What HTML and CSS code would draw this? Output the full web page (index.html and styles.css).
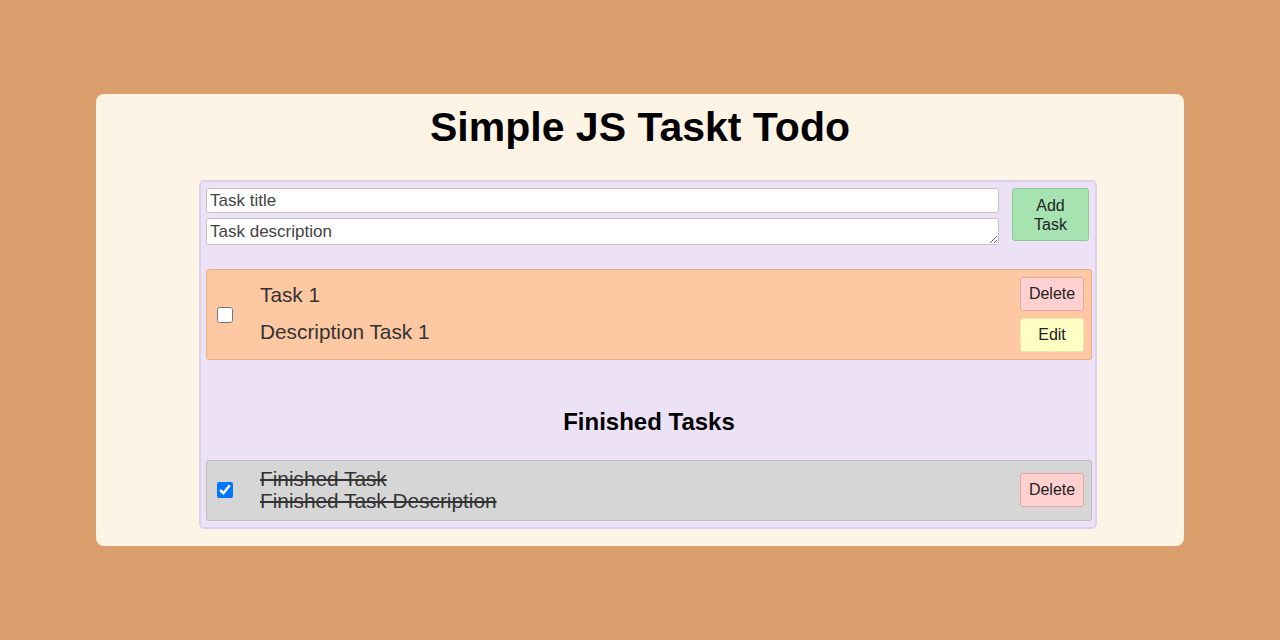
FILE: index.html
```html
<!DOCTYPE html>
<html>
<head>
<meta charset="utf-8">
<link rel="stylesheet" href="styles.css">
</head>
<body>
<div class="card">
  <h1 class="title">Simple JS Taskt Todo</h1>
  <div class="panel">
    <form class="form">
      <div class="fields">
        <input class="field" type="text" value="Task title">
        <textarea class="field area" rows="1">Task description</textarea>
      </div>
      <button type="button" class="btn add">Add Task</button>
    </form>
    <div class="task">
      <input type="checkbox" class="check">
      <div class="body">
        <p class="task-title">Task 1</p>
        <p class="task-desc">Description Task 1</p>
      </div>
      <div class="actions">
        <button type="button" class="btn del">Delete</button>
        <button type="button" class="btn edit">Edit</button>
      </div>
    </div>
    <h2 class="sub">Finished Tasks</h2>
    <div class="task done">
      <input type="checkbox" class="check" checked>
      <div class="body">
        <p class="task-title">Finished Task</p>
        <p class="task-desc">Finished Task Description</p>
      </div>
      <div class="actions">
        <button type="button" class="btn del">Delete</button>
      </div>
    </div>
  </div>
</div>
</body>
</html>
```
FILE: styles.css
```css
html, body {
  margin: 0;
  padding: 0;
}
body {
  background: #d99e6b;
  font-family: "Liberation Sans", Arial, sans-serif;
  padding-top: 94px;
  height: 640px;
  box-sizing: border-box;
}
.card {
  width: 1088px;
  height: 452px;
  margin: 0 auto;
  background: #fef4e6;
  border-radius: 8px;
  box-sizing: border-box;
  padding-top: 10px;
}
.title {
  margin: 0;
  text-align: center;
  font-size: 41px;
  font-weight: bold;
  color: #000;
  line-height: 46px;
}
.panel {
  width: 898px;
  margin: 30px 0 0 103px;
  box-sizing: border-box;
  background: #ede2f5;
  border: 2px solid #ddd0ee;
  border-radius: 5px;
  padding: 6px 3px 6px 5px;
}
.form {
  display: flex;
  align-items: flex-start;
  gap: 13px;
  margin: 0;
}
.fields {
  display: flex;
  flex-direction: column;
  gap: 5px;
  width: 793px;
}
.field {
  box-sizing: border-box;
  width: 793px;
  margin: 0;
  border: 1px solid #c4c4c4;
  border-radius: 3px;
  background: #fff;
  font-family: "Liberation Sans", Arial, sans-serif;
  font-size: 17px;
  color: #444;
  padding: 1px 3px;
}
.field:first-child {
  height: 25px;
}
.area {
  height: 27px;
  resize: vertical;
  overflow: hidden;
  line-height: 22px;
  padding-top: 2px;
}
.btn {
  font-family: "Liberation Sans", Arial, sans-serif;
  font-size: 16px;
  color: #222;
  border-radius: 3px;
  cursor: pointer;
  margin: 0;
  padding: 0;
}
.add {
  width: 77px;
  height: 53px;
  background: #a6e3b0;
  border: 1px solid #8ccb96;
  line-height: 19px;
  padding: 0 14px;
}
.task {
  display: flex;
  align-items: center;
  margin-top: 24px;
  background: #fec8a2;
  border: 1px solid #e8b08a;
  border-radius: 3px;
  padding: 7px 7px 7px 10px;
}
.check {
  width: 16px;
  height: 16px;
  margin: 0;
  flex: none;
}
.body {
  flex: 1;
  margin-left: 27px;
  margin-bottom: 3px;
  color: #333;
  font-size: 20.8px;
  line-height: 22px;
}
.body p {
  margin: 0;
}
.task-title + .task-desc {
  margin-top: 15px;
}
.actions {
  display: flex;
  flex-direction: column;
  gap: 7px;
}
.del, .edit {
  width: 64px;
  height: 34px;
}
.del {
  background: #ffd0d0;
  border: 1px solid #e2a8a8;
}
.edit {
  background: #ffffc4;
  border: 1px solid #e8e8b0;
}
.sub {
  margin: 48px 0 0;
  text-align: center;
  font-size: 24px;
  font-weight: bold;
  line-height: 28px;
  color: #000;
}
.done {
  margin-top: 24px;
  background: #d6d6d6;
  border-color: #bdbdbd;
  padding-top: 7px;
  padding-bottom: 8px;
}
.done .body {
  text-decoration: line-through;
  margin-bottom: 0;
}
.done .task-title + .task-desc {
  margin-top: 0;
}
```
